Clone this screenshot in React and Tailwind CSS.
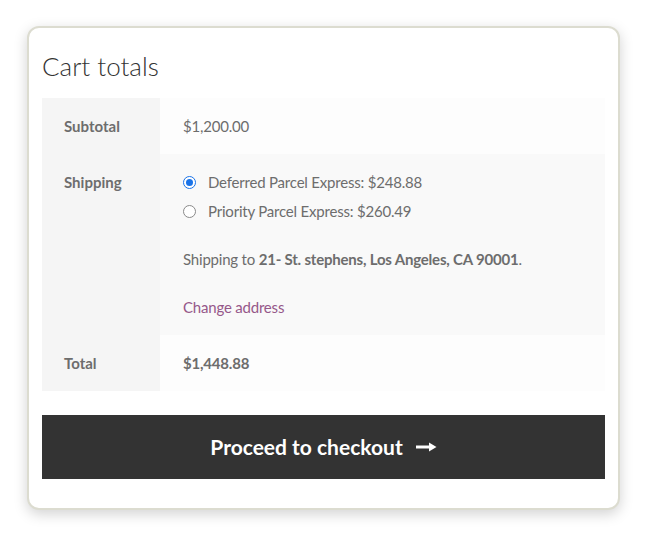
import React, { useState } from 'react';

const Radio = ({ checked }) => (
    <span
        className={`inline-flex items-center justify-center w-[13px] h-[13px] rounded-full flex-shrink-0 bg-white ${checked ? 'border-[1.5px] border-[#1a73e8]' : 'border border-[#8a8a8a]'}`}
    >
        {checked && <span className="w-[7px] h-[7px] rounded-full bg-[#1a73e8]" />}
    </span>
);

const Arrow = () => (
    <svg width="21" height="12" viewBox="0 0 21 12" fill="none" className="flex-shrink-0">
        <path d="M0 6h16" stroke="white" strokeWidth="3" />
        <path d="M13 1.5 L20.5 6 L13 10.5 Z" fill="white" />
    </svg>
);

const App = () => {
    const [method, setMethod] = useState('deferred');

    return (
        <div className="min-h-screen bg-white pt-[26px] pl-[27px] font-['Lato',sans-serif]">
            <div className="w-[593px] h-[484px] rounded-[12px] border-2 border-[#dcdcd0] bg-white shadow-[0_4px_14px_rgba(0,0,0,0.18)] px-[13px] pt-[20px]">
                {/* Title */}
                <h2 className="text-[26px] font-light text-[#333333] leading-[36px] mb-[14px]">Cart totals</h2>

                {/* Totals table */}
                <table className="w-full border-collapse text-[15px] leading-[24px] text-[#6d6d6d]">
                    <tbody>
                        <tr>
                            <th className="w-[118px] bg-[#f5f5f5] text-left align-top font-bold px-[22px] py-[16px]">Subtotal</th>
                            <td className="bg-[#fdfdfd] px-[23px] py-[16px] tracking-[-0.2px]">$1,200.00</td>
                        </tr>
                        <tr>
                            <th className="bg-[#f5f5f5] text-left align-top font-bold px-[22px] py-[16px]">Shipping</th>
                            <td className="bg-[#f9f9f9] px-[23px] py-[16px] tracking-[-0.2px]">
                                <ul className="flex flex-col gap-[5px]">
                                    <li className="flex items-center gap-[12px] cursor-pointer" onClick={() => setMethod('deferred')}>
                                        <Radio checked={method === 'deferred'} />
                                        <span>Deferred Parcel Express: $248.88</span>
                                    </li>
                                    <li className="flex items-center gap-[12px] cursor-pointer" onClick={() => setMethod('priority')}>
                                        <Radio checked={method === 'priority'} />
                                        <span>Priority Parcel Express: $260.49</span>
                                    </li>
                                </ul>
                                <p className="mt-[24px]">
                                    Shipping to <strong className="font-bold">21- St. stephens, Los Angeles, CA 90001</strong>.
                                </p>
                                <a href="#" className="block mt-[24px] text-[#96588a]">Change address</a>
                            </td>
                        </tr>
                        <tr>
                            <th className="bg-[#f5f5f5] text-left align-top font-bold px-[22px] py-[16px]">Total</th>
                            <td className="bg-[#fdfdfd] px-[23px] py-[16px] font-bold tracking-[-0.2px]">$1,448.88</td>
                        </tr>
                    </tbody>
                </table>

                {/* Checkout button */}
                <button className="mt-[24px] w-full h-[64px] bg-[#333333] text-white text-[21px] font-bold flex items-center justify-center gap-[13px]">
                    <span>Proceed to checkout</span>
                    <Arrow />
                </button>
            </div>
        </div>
    );
};

export default App;
